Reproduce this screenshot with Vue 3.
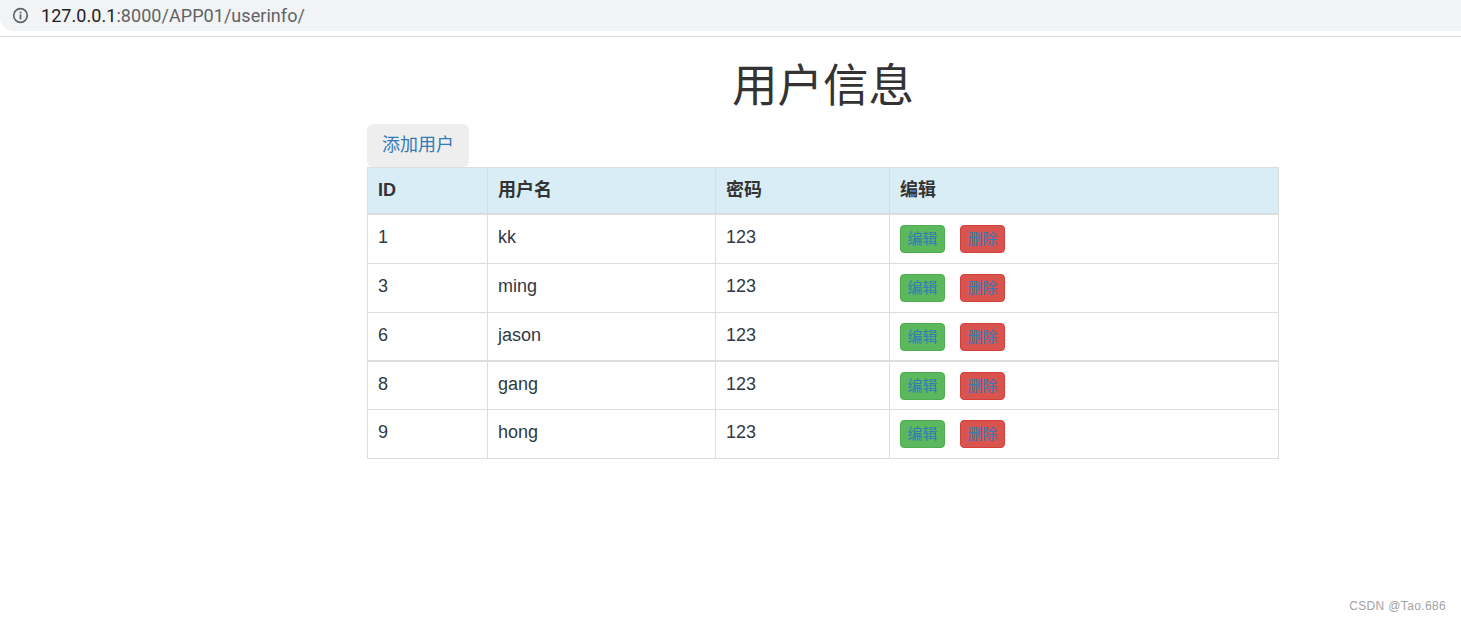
<script setup>
const rows = [
  { id: 1, name: 'kk' },
  { id: 3, name: 'ming' },
  { id: 6, name: 'jason' },
  { id: 8, name: 'gang' },
  { id: 9, name: 'hong' }
]
</script>

<template>
  <div class="page">
    <header class="browser">
      <div class="address">
        <svg class="info" width="17" height="17" viewBox="0 0 17 17" fill="none">
          <circle cx="8.5" cy="8.5" r="6.8" stroke="#5f6368" stroke-width="1.7" />
          <rect x="7.6" y="7.4" width="1.8" height="5" fill="#5f6368" />
          <rect x="7.6" y="4.6" width="1.8" height="1.8" fill="#5f6368" />
        </svg>
        <span class="url"><span class="host">127.0.0.1</span>:8000/APP01/userinfo/</span>
      </div>
    </header>
    <main class="content">
      <h1 class="title">用户信息</h1>
      <a class="add" href="#" @click.prevent>添加用户</a>
      <table class="grid">
        <colgroup>
          <col class="c1" /><col class="c2" /><col class="c3" /><col class="c4" />
        </colgroup>
        <thead>
          <tr><th>ID</th><th>用户名</th><th>密码</th><th>编辑</th></tr>
        </thead>
        <tbody>
          <tr v-for="(r, i) in rows" :key="r.id" :class="{ thick: r.id === 6, first: i === 0 }">
            <td>{{ r.id }}</td>
            <td>{{ r.name }}</td>
            <td>123</td>
            <td class="ops">
              <a class="btn edit" href="#" @click.prevent>编辑</a>
              <a class="btn del" href="#" @click.prevent>删除</a>
            </td>
          </tr>
        </tbody>
      </table>
    </main>
    <div class="mark">CSDN @Tao.686</div>
  </div>
</template>

<style>
html, body { margin: 0; background: #fff; }
</style>

<style scoped>
.page {
  position: relative;
  height: 620px;
  overflow: hidden;
  font-family: "Liberation Sans", "Noto Sans CJK SC", sans-serif;
  color: #333;
}
.browser {
  height: 36px;
  border-bottom: 1px solid #dadce0;
}
.address {
  height: 31px;
  background: #f1f3f4;
  border-bottom-left-radius: 14px;
  display: flex;
  align-items: center;
  padding-left: 12px;
}
.info { margin-right: 12px; }
.url {
  font-size: 18px;
  letter-spacing: 0.05px;
  color: #5f6368;
  font-family: "Roboto", "Liberation Sans", sans-serif;
}
.host { color: #202124; }
.content {
  width: 912px;
  margin-left: 367px;
}
.title {
  margin: 0;
  height: 87px;
  padding-top: 21px;
  box-sizing: border-box;
  text-align: center;
  font-size: 45.5px;
  line-height: 58px;
  font-weight: 400;
  color: #333;
}
.add {
  display: block;
  width: 102px;
  height: 43px;
  line-height: 43px;
  text-align: center;
  background: #eee;
  border-radius: 6px;
  font-size: 18px;
  color: #337ab7;
  text-decoration: none;
}
.grid {
  width: 912px;
  border-collapse: collapse;
  table-layout: fixed;
  font-size: 18px;
}
.c1 { width: 120px; }
.c2 { width: 228px; }
.c3 { width: 174px; }
.grid th, .grid td {
  border: 1px solid #ddd;
  padding: 0 10px;
  text-align: left;
  box-sizing: border-box;
}
.grid th {
  height: 46px;
  background: #d9edf7;
  font-weight: 700;
  border-bottom-width: 2px;
  line-height: 44px;
}
.grid td {
  height: 49px;
  line-height: 44px;
  vertical-align: top;
  color: #2f3a45;
}
.grid tr.first td { height: 50px; }
.grid tr.thick td { height: 48px; border-bottom-width: 2px; }
.btn {
  display: inline-block;
  width: 45px;
  height: 28px;
  box-sizing: border-box;
  margin-top: 10px;
  border-radius: 4px;
  border: 1px solid;
  font-size: 15px;
  line-height: 25px;
  text-align: center;
  vertical-align: top;
  color: #337ab7;
  text-decoration: none;
}
.edit { background: #5cb85c; border-color: #4cae4c; margin-right: 15px; }
.del { background: #d9534f; border-color: #d43f3a; }
.mark {
  position: absolute;
  right: 15px;
  top: 598px;
  font-size: 12px;
  line-height: 16px;
  color: #a3a3a3;
  letter-spacing: 0.35px;
}
</style>
